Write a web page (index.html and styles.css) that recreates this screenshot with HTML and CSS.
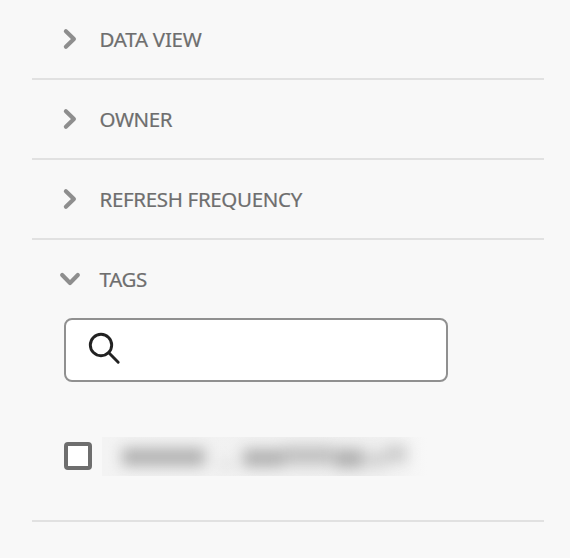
FILE: index.html
```html
<!DOCTYPE html>
<html lang="en">
<head>
<meta charset="utf-8">
<title>Filters</title>
<link rel="stylesheet" href="styles.css">
</head>
<body>
<main class="filters">
  <section class="section">
    <div class="heading"><svg class="chevron" viewBox="0 0 24 24"><path d="M7.9 4.2L15.9 12L7.9 19.8"/></svg><span class="label data-view">DATA VIEW</span></div>
  </section>
  <section class="section">
    <div class="heading"><svg class="chevron" viewBox="0 0 24 24"><path d="M7.9 4.2L15.9 12L7.9 19.8"/></svg><span class="label owner">OWNER</span></div>
  </section>
  <section class="section">
    <div class="heading"><svg class="chevron" viewBox="0 0 24 24"><path d="M7.9 4.2L15.9 12L7.9 19.8"/></svg><span class="label refresh">REFRESH FREQUENCY</span></div>
  </section>
  <section class="section tags">
    <div class="heading"><svg class="chevron" viewBox="0 0 24 24"><path d="M4.2 8.1L12 15.9L19.8 8.1"/></svg><span class="label">TAGS</span></div>
    <div class="search">
      <svg class="magnifier" viewBox="0 0 36 36"><circle cx="15" cy="15" r="10.7"/><path d="M22.8 22.8L32.2 32.2"/></svg>
    </div>
    <div class="option">
      <span class="checkbox"></span>
      <span class="redacted"></span>
    </div>
  </section>
</main>
</body>
</html>
```
FILE: styles.css
```css
* { box-sizing: border-box; }

body {
  margin: 0;
  background: #f8f8f8;
  font-family: "Noto Sans", sans-serif;
  color: #6e6e6e;
}

.filters { width: 512px; margin-left: 32px; }

.section { height: 80px; border-bottom: 2px solid #e1e1e1; }

.tags { height: 282px; }

.heading {
  display: flex;
  align-items: center;
  height: 78px;
  padding-left: 26px;
  gap: 17.5px;
}

.chevron { width: 24px; height: 24px; flex: none; }

.chevron path {
  fill: none;
  stroke: #8e8e8e;
  stroke-width: 4.2;
  stroke-linecap: round;
  stroke-linejoin: round;
}

.label {
  font-size: 20.5px;
  line-height: 28px;
  letter-spacing: -0.33px;
  white-space: nowrap;
  -webkit-text-stroke: 0.2px #6e6e6e;
}

.data-view { letter-spacing: -0.25px; }
.owner { letter-spacing: -0.4px; }

.search {
  width: 384px;
  height: 64px;
  margin-left: 32px;
  padding: 10px 20px;
  background: #fff;
  border: 2px solid #909090;
  border-radius: 8px;
}

.magnifier { display: block; width: 36px; height: 36px; }

.magnifier circle,
.magnifier path {
  fill: none;
  stroke: #222;
  stroke-width: 2.9;
  stroke-linecap: round;
}

.option {
  display: flex;
  align-items: flex-start;
  gap: 10px;
  margin: 55px 0 0 32px;
  height: 39px;
}

.checkbox {
  width: 28px;
  height: 28px;
  margin-top: 5px;
  background: #fff;
  border: 4px solid #6e6e6e;
  border-radius: 4px;
}

.redacted {
  position: relative;
  width: 330px;
  height: 39px;
  overflow: hidden;
  background: linear-gradient(90deg, #f3f3f3, #f0f0f0 270px, #f8f8f8 325px);
}

.redacted::before {
  content: "";
  position: absolute;
  inset: 0;
  filter: blur(7px);
  background:
    linear-gradient(#b2b2b2, #b2b2b2) 20px 11px / 83px 18px no-repeat,
    linear-gradient(#d9d9d9, #d9d9d9) 118px 24px / 14px 6px no-repeat,
    linear-gradient(#b2b2b2, #b2b2b2) 141px 12px / 40px 18px no-repeat,
    linear-gradient(#c1c1c1, #c1c1c1) 181px 9px / 51px 19px no-repeat,
    linear-gradient(#b0b0b0, #b0b0b0) 233px 12px / 28px 19px no-repeat,
    linear-gradient(#d1d1d1, #d1d1d1) 263px 15px / 22px 15px no-repeat,
    linear-gradient(#cdcdcd, #cdcdcd) 283px 8px / 22px 18px no-repeat;
}
```
